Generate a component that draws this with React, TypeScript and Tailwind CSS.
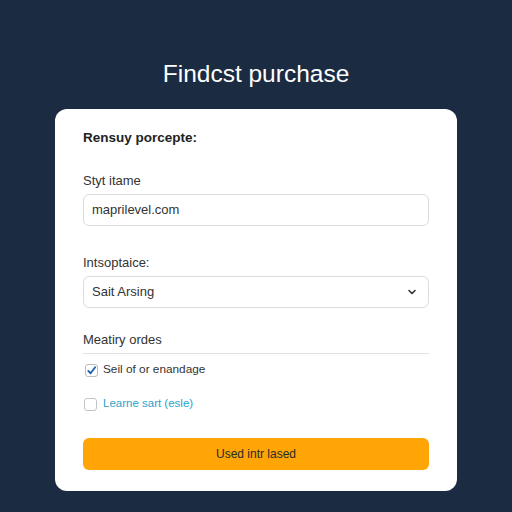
import React from "react";

export default function App() {
  return (
    <div
      className="w-[512px] h-[512px] bg-[#1b2b42] flex flex-col items-center pt-[59px]"
      style={{ fontFamily: '"Liberation Sans", Arial, sans-serif' }}
    >
      <h1 className="text-[24.5px] leading-[30px] text-white">Findcst purchase</h1>
      <div className="mt-[20px] w-[402px] h-[382px] bg-white rounded-[12px] px-[28px] pt-[19px] flex flex-col">
        <div className="text-[13.5px] leading-5 font-semibold text-[#222]">Rensuy porcepte:</div>
        <div className="mt-[24px] text-[13px] leading-[18px] text-[#333]">Styt itame</div>
        <div className="mt-1 h-[32px] border border-[#dcdcdc] rounded-[6px] px-[8px] flex items-center text-[13px] text-[#333]">
          maprilevel.com
        </div>
        <div className="mt-[28px] text-[13px] leading-[18px] text-[#333]">Intsoptaice:</div>
        <div className="mt-1 h-[32px] border border-[#dcdcdc] rounded-[6px] pl-[8px] pr-[10px] flex items-center justify-between text-[13px] text-[#333]">
          <span>Sait Arsing</span>
          <svg width="12" height="12" viewBox="0 0 12 12" fill="none" stroke="#333" strokeWidth="1.6" strokeLinecap="round" strokeLinejoin="round">
            <path d="M3 4.5 L6 7.5 L9 4.5" />
          </svg>
        </div>
        <div className="mt-[23px] text-[13px] leading-[18px] text-[#333]">Meatiry ordes</div>
        <div className="mt-1 border-t border-[#e2e2e2]" />
        <div className="mt-[6px] h-5 flex items-center gap-[5px] pl-[2px] text-[11.8px] text-[#333]">
          <span className="w-[13px] h-[13px] border border-[#bbb] rounded-[3px] flex items-center justify-center">
            <svg width="11" height="11" viewBox="0 0 12 12" fill="none" stroke="#1f5fb0" strokeWidth="2" strokeLinecap="round" strokeLinejoin="round">
              <path d="M2.5 6.5 L5 9 L10 2.5" />
            </svg>
          </span>
          <span>Seil of or enandage</span>
        </div>
        <div className="mt-[14px] h-5 flex items-center gap-[6px] pl-[1px] text-[11.5px] text-[#2ba3cc]">
          <span className="w-[13px] h-[13px] border border-[#c4c4c4] rounded-[3px]" />
          <span>Learne sart (esle)</span>
        </div>
        <button className="mt-[24px] h-[32px] w-full bg-[#ffa506] rounded-[6px] text-[12px] text-[#2a2a2a] flex items-center justify-center">
          Used intr lased
        </button>
      </div>
    </div>
  );
}
